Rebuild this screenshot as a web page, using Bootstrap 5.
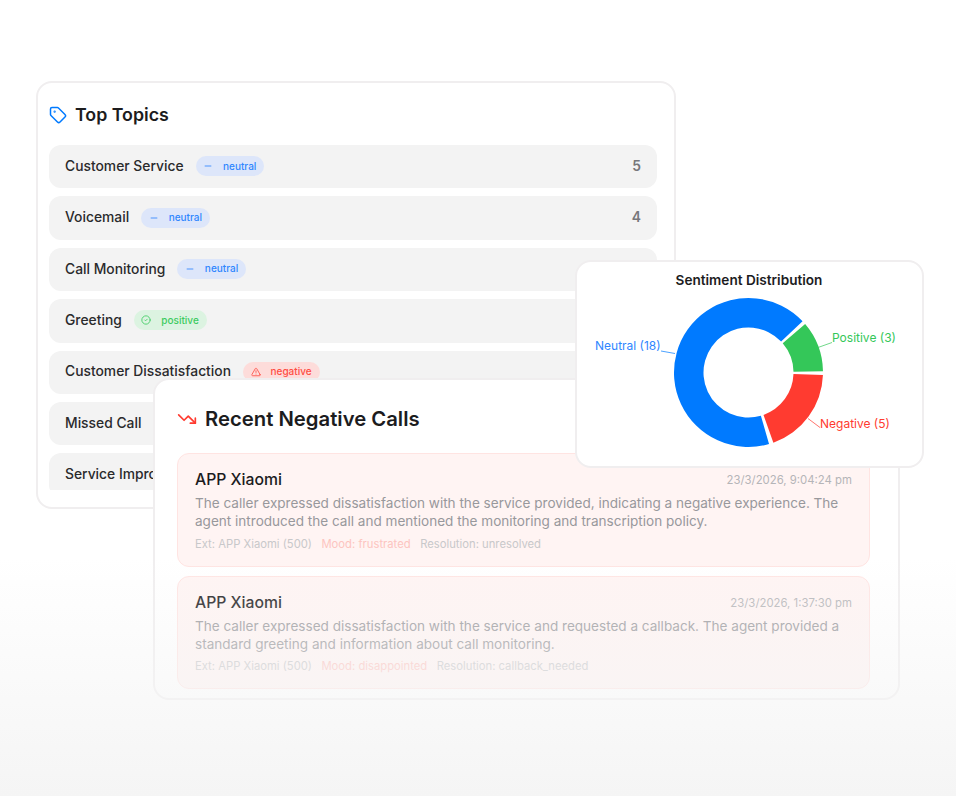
<!DOCTYPE html>
<html lang="en">
<head>
    <meta charset="UTF-8">
    <meta name="viewport" content="width=device-width, initial-scale=1.0">
    <title>Call Insights</title>
    <link href="https://cdn.jsdelivr.net/npm/bootstrap@5.3.0/dist/css/bootstrap.min.css" rel="stylesheet">
    <style>
        body {
            font-family: "Inter", "Liberation Sans", sans-serif;
            background: #fff;
            color: #1c1c1e;
            margin: 0;
        }
        .stage {
            position: relative;
            width: 956px;
            height: 796px;
            overflow: hidden;
        }
        .panel {
            position: absolute;
            background: #fff;
            border: 2px solid #f0eeef;
            border-radius: 16px;
        }
        .panel-topics { left: 36px; top: 81px; width: 640px; height: 428px; padding: 20px 17px 18px 11px; }
        .panel-calls { left: 153px; top: 378px; width: 747px; height: 322px; padding: 25px 28px 9px 22px; }
        .panel-chart { left: 575px; top: 260px; width: 349px; height: 208px; }
        .panel-title { font-weight: 600; line-height: 24px; }
        .topics-title { font-size: 17.8px; margin-bottom: 18px; }
        .calls-title { font-size: 20.3px; margin-bottom: 20px; line-height: 28px; }
        .topic-list { height: 345px; overflow: hidden; }
        .topic-row {
            height: 43.4px;
            background: #f3f3f3;
            border-radius: 12px;
            padding: 0 16px 1px;
            font-size: 13.85px;
            font-weight: 450;
            color: #2a2a2c;
            flex-shrink: 0;
        }
        .topic-left { gap: 12px; }
        .topic-count { color: #77777b; font-weight: 600; }
        .mood-pill {
            height: 20px;
            padding: 0 8px 0 7.5px;
            border-radius: 10px;
            font-size: 10px;
            font-weight: 500;
            gap: 10px;
        }
        .mood-neutral { background: #dde6fa; color: #2f86ff; }
        .mood-positive { background: #dcf3e1; color: #3ccb60; }
        .mood-negative { background: #fddcda; color: #ff4d43; }
        .call-list { gap: 9px; }
        .call-item {
            height: 113.5px;
            background: #fff4f3;
            border: 1px solid #ffe4e2;
            border-radius: 12px;
            padding: 15px 17px;
        }
        .call-name { font-size: 15.75px; font-weight: 450; line-height: 22px; }
        .call-time { font-size: 11.35px; color: #b5b5b8; line-height: 22px; }
        .call-text { font-size: 13.56px; line-height: 18px; color: #98989c; margin: 3px 0 4.6px; }
        .call-meta { font-size: 11.25px; line-height: 18px; color: #c8c8ca; gap: 9.5px; }
        .call-mood { color: #fdc4c0; }
        .chart-title {
            font-size: 13.6px;
            font-weight: 600;
            text-align: center;
            line-height: 20px;
            position: absolute;
            left: -1px;
            right: 0;
            top: 8px;
        }
        .chart-svg { display: block; margin: -1px 0 0 -1px; }
        .chart-svg text { font-family: "Inter", "Liberation Sans", sans-serif; font-size: 12px; }
        .bottom-fade {
            position: absolute;
            left: 0;
            right: 0;
            top: 557px;
            bottom: 0;
            background: linear-gradient(to bottom, rgba(245,245,245,0), #f5f5f5);
            pointer-events: none;
        }
    </style>
</head>
<body>
    <div class="stage">
        <!-- Top topics -->
        <div class="panel panel-topics">
            <div class="panel-title topics-title d-flex align-items-center gap-2">
                <svg width="18" height="18" viewBox="0 0 24 24" fill="none" stroke="#007aff" stroke-width="2" stroke-linecap="round" stroke-linejoin="round"><path d="M12.586 2.586A2 2 0 0 0 11.172 2H4a2 2 0 0 0-2 2v7.172a2 2 0 0 0 .586 1.414l8.704 8.704a2.426 2.426 0 0 0 3.42 0l6.58-6.58a2.426 2.426 0 0 0 0-3.42z"/><circle cx="7.5" cy="7.5" r=".5" fill="#007aff"/></svg>
                <span>Top Topics</span>
            </div>
            <div class="topic-list d-flex flex-column gap-2" id="topics"></div>
        </div>

        <!-- Recent negative calls -->
        <div class="panel panel-calls">
            <div class="panel-title calls-title d-flex align-items-center gap-2">
                <svg width="20" height="20" viewBox="0 0 24 24" fill="none" stroke="#ff3b30" stroke-width="2" stroke-linecap="round" stroke-linejoin="round"><polyline points="22 17 13.5 8.5 8.5 13.5 2 7"/><polyline points="16 17 22 17 22 11"/></svg>
                <span>Recent Negative Calls</span>
            </div>
            <div class="call-list d-flex flex-column">
                <div class="call-item">
                    <div class="d-flex justify-content-between align-items-start">
                        <span class="call-name">APP Xiaomi</span>
                        <span class="call-time">23/3/2026, 9:04:24 pm</span>
                    </div>
                    <p class="call-text">The caller expressed dissatisfaction with the service provided, indicating a negative experience. The agent introduced the call and mentioned the monitoring and transcription policy.</p>
                    <div class="call-meta d-flex">
                        <span>Ext: APP Xiaomi (500)</span>
                        <span class="call-mood">Mood: frustrated</span>
                        <span>Resolution: unresolved</span>
                    </div>
                </div>
                <div class="call-item">
                    <div class="d-flex justify-content-between align-items-start">
                        <span class="call-name">APP Xiaomi</span>
                        <span class="call-time">23/3/2026, 1:37:30 pm</span>
                    </div>
                    <p class="call-text">The caller expressed dissatisfaction with the service and requested a callback. The agent provided a standard greeting and information about call monitoring.</p>
                    <div class="call-meta d-flex">
                        <span>Ext: APP Xiaomi (500)</span>
                        <span class="call-mood">Mood: disappointed</span>
                        <span>Resolution: callback_needed</span>
                    </div>
                </div>
            </div>
        </div>

        <div class="bottom-fade"></div>

        <!-- Sentiment donut -->
        <div class="panel panel-chart">
            <div class="chart-title">Sentiment Distribution</div>
            <svg class="chart-svg" width="346" height="205" viewBox="0 0 346 205" id="donut">
                <g id="slices"></g>
                <line x1="85" y1="90" x2="99" y2="92.5" stroke="#007aff" stroke-opacity=".7"/>
                <line x1="256" y1="81.5" x2="242" y2="86.5" stroke="#34c759" stroke-opacity=".7"/>
                <line x1="244" y1="166.5" x2="232" y2="157.5" stroke="#ff3b30" stroke-opacity=".7"/>
                <text x="19" y="89" fill="#2f86ff">Neutral (18)</text>
                <text x="256" y="81" fill="#34c759">Positive (3)</text>
                <text x="244" y="167" fill="#ff3b30">Negative (5)</text>
            </svg>
        </div>
    </div>

    <script src="https://cdn.jsdelivr.net/npm/bootstrap@5.3.0/dist/js/bootstrap.bundle.min.js"></script>
    <script>
        const icons = {
            neutral: '<path d="M5 12h14"/>',
            positive: '<circle cx="12" cy="12" r="10"/><path d="m9 12 2 2 4-4"/>',
            negative: '<path d="m21.73 18-8-14a2 2 0 0 0-3.48 0l-8 14A2 2 0 0 0 4 21h16a2 2 0 0 0 1.73-3Z"/><path d="M12 9v4"/><path d="M12 17h.01"/>'
        };
        const topics = [
            ['Customer Service', 'neutral', 5],
            ['Voicemail', 'neutral', 4],
            ['Call Monitoring', 'neutral', 3],
            ['Greeting', 'positive', 3],
            ['Customer Dissatisfaction', 'negative', 3],
            ['Missed Call', 'neutral', 2],
            ['Service Improvement', 'neutral', 2]
        ];
        document.getElementById('topics').innerHTML = topics.map(t => `
            <div class="topic-row d-flex align-items-center justify-content-between">
                <div class="d-flex align-items-center topic-left">
                    <span>${t[0]}</span>
                    <span class="mood-pill mood-${t[1]} d-inline-flex align-items-center">
                        <svg width="10" height="10" viewBox="0 0 24 24" fill="none" stroke="currentColor" stroke-width="2" stroke-linecap="round" stroke-linejoin="round">${icons[t[1]]}</svg>${t[1]}
                    </span>
                </div>
                <span class="topic-count">${t[2]}</span>
            </div>`).join('');

        // donut slices, angles in degrees counter-clockwise from east
        const cx = 172.5, cy = 111.5, ro = 74.5, ri = 45;
        function pt(r, a) {
            const rad = a * Math.PI / 180;
            return (cx + r * Math.cos(rad)).toFixed(2) + ' ' + (cy - r * Math.sin(rad)).toFixed(2);
        }
        function slice(from, to, color) {
            const large = Math.abs(to - from) > 180 ? 1 : 0;
            return `<path fill="${color}" d="M${pt(ro, from)}A${ro} ${ro} 0 ${large} 1 ${pt(ro, to)}L${pt(ri, to)}A${ri} ${ri} 0 ${large} 0 ${pt(ri, from)}Z"/>`;
        }
        document.getElementById('slices').innerHTML =
            slice(40.5, 1, '#34c759') +
            slice(-2, -70.5, '#ff3b30') +
            slice(-74, -316.5, '#007aff');
    </script>
</body>
</html>
